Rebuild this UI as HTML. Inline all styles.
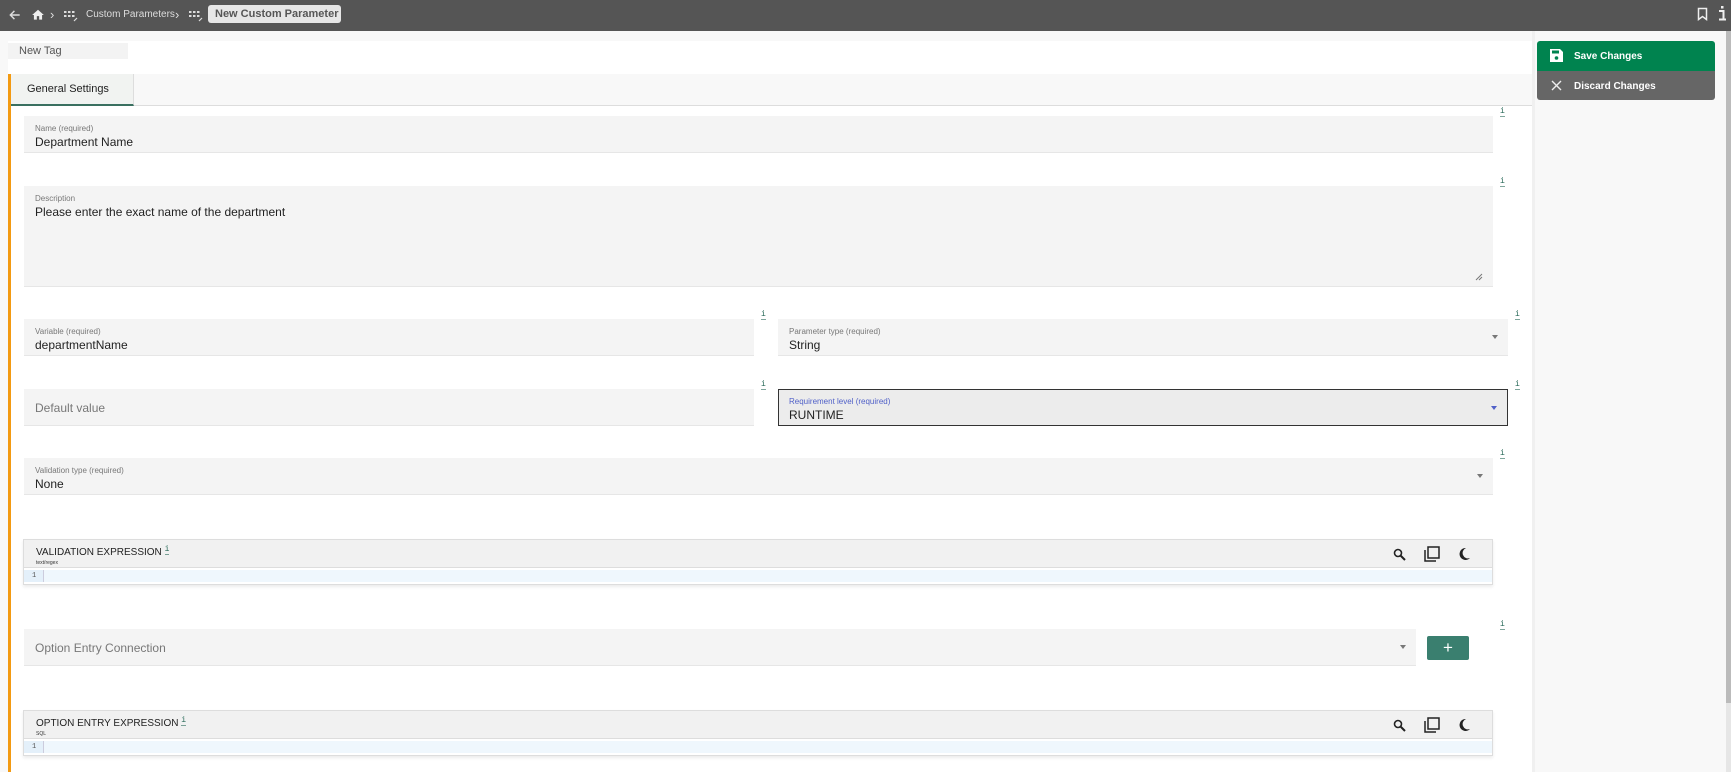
<!DOCTYPE html>
<html><head><meta charset="utf-8"><style>
*{box-sizing:border-box;margin:0;padding:0}
body{width:1731px;height:772px;overflow:hidden;background:#f8f8f8;font-family:"Liberation Sans",sans-serif;position:relative}
.abs{position:absolute;white-space:nowrap}
.top{left:0;top:0;width:1731px;height:31px;background:#555}
.field{position:absolute;background:#f4f4f4;border-bottom:1px solid #e6e6e6}
.lbl{position:absolute;left:11px;top:8px;font-size:8px;color:#777;white-space:nowrap}
.val{position:absolute;left:11px;top:19px;font-size:12px;color:#222;white-space:nowrap}
.ph{position:absolute;left:11px;top:12px;font-size:12px;color:#777}
.info{position:absolute;font-family:"Liberation Mono",monospace;font-size:8px;color:#2a6a5a;line-height:8px}
.info:after{content:"";position:absolute;left:0;right:0;bottom:-1px;height:1px;background:#2a6a5a;opacity:.6}
.arrow{position:absolute;right:10px;top:16px;width:0;height:0;border-left:3.5px solid transparent;border-right:3.5px solid transparent;border-top:4px solid #777}
.ed{position:absolute;left:23px;width:1470px;height:46px;border:1px solid #ddd;background:#fff;box-shadow:0 2px 3px rgba(0,0,0,.08)}
.edh{position:absolute;left:0;top:0;right:0;height:28px;background:#f1f1f1;border-bottom:1px solid #ddd}
.edt{position:absolute;left:12px;top:7px;font-size:10px;color:#222;white-space:nowrap}
.eds{position:absolute;left:12px;top:20px;font-size:5px;color:#333}
.edl{position:absolute;left:0;top:30px;right:0;height:12px;background:#eff7fd}
.edn{position:absolute;left:0;top:30px;width:20px;height:12px;background:#e4f0fa;border-right:1px solid #ccd;font-size:7px;color:#555;padding:2px 0 0 8px;font-family:"Liberation Mono",monospace}
</style></head><body>
<div class="abs top"></div>
<svg class="abs" style="left:8px;top:8px" width="14" height="14" viewBox="0 0 24 24"><path d="M20 12H5M11 5l-7 7 7 7" stroke="#ddd" stroke-width="2.5" fill="none"/></svg>
<svg class="abs" style="left:31px;top:8px" width="14" height="14" viewBox="0 0 24 24"><path d="M10 20v-6h4v6h5v-8h3L12 3 2 12h3v8z" fill="#eee"/></svg>
<div class="abs" style="left:50px;top:7px;color:#ddd;font-size:13px">›</div>
<svg class="abs" style="left:64px;top:10px" width="14" height="12" viewBox="0 0 14 12"><g fill="#ddd"><rect x="0" y="1" width="2.5" height="2"/><rect x="4" y="1" width="2.5" height="2"/><rect x="8" y="1" width="2.5" height="2"/><rect x="0" y="5" width="2.5" height="2"/><rect x="4" y="5" width="2.5" height="2"/><rect x="8" y="5" width="2.5" height="2"/></g><path d="M10 11l3-3" stroke="#ddd" stroke-width="1.2"/></svg>
<div class="abs" style="left:86px;top:9px;color:#ddd;font-size:10px">Custom Parameters</div>
<div class="abs" style="left:175px;top:7px;color:#ddd;font-size:13px">›</div>
<svg class="abs" style="left:189px;top:10px" width="14" height="12" viewBox="0 0 14 12"><g fill="#ddd"><rect x="0" y="1" width="2.5" height="2"/><rect x="4" y="1" width="2.5" height="2"/><rect x="8" y="1" width="2.5" height="2"/><rect x="0" y="5" width="2.5" height="2"/><rect x="4" y="5" width="2.5" height="2"/><rect x="8" y="5" width="2.5" height="2"/></g><path d="M10 11l3-3" stroke="#ddd" stroke-width="1.2"/></svg>
<div class="abs" style="left:208px;top:5px;width:133px;height:18px;background:#e6e6e6;border-radius:3px;color:#555;font-size:11px;font-weight:bold;padding:3px 0 0 7px">New Custom Parameter</div>
<svg class="abs" style="left:1697px;top:7px" width="11" height="14" viewBox="0 0 11 14"><path d="M1.5 1.5h8v11l-4-3-4 3z" stroke="#eee" stroke-width="1.5" fill="none"/></svg>
<svg class="abs" style="left:1717px;top:6px" width="10" height="15" viewBox="0 0 10 15"><rect x="4" y="0" width="2.5" height="2.5" fill="#eee"/><path d="M2 5h4.5v8M2 13.5h7" stroke="#eee" stroke-width="2" fill="none"/></svg>

<div class="abs" style="left:8px;top:41px;width:1524px;height:33px;background:#fff"></div>
<div class="abs" style="left:8px;top:43px;width:120px;height:16px;background:#f3f3f3;font-size:11px;color:#555;padding:2px 0 0 11px">New Tag</div>
<div class="abs" style="left:8px;top:74px;width:1524px;height:698px;background:#fff"></div>
<div class="abs" style="left:8px;top:74px;width:1524px;height:32px;background:#f8f8f8;border-bottom:1px solid #ddd"></div>
<div class="abs" style="left:11px;top:74px;width:123px;height:32px;background:#f1f3f1;border-right:1px solid #ddd;border-bottom:2px solid #3a7060;font-size:11px;color:#222;padding:9px 0 0 16px">General Settings</div>
<div class="abs" style="left:8px;top:74px;width:3px;height:698px;background:#f39a12"></div>
<div class="abs" style="left:1532px;top:31px;width:3px;height:741px;background:#f0f0f0"></div>
<div class="abs" style="left:1726px;top:31px;width:5px;height:672px;background:#bbb"></div>
<div class="abs" style="left:1726px;top:703px;width:5px;height:69px;background:#e6e6e6"></div>

<div class="abs" style="left:1537px;top:41px;width:178px;height:30px;background:#00834f;border-radius:3px 3px 0 0;color:#fff;font-size:10px;font-weight:bold;padding:10px 0 0 37px">Save Changes</div>
<svg class="abs" style="left:1550px;top:49px" width="13" height="13" viewBox="0 0 13 13"><path d="M0 0h10l3 3v10H0z" fill="#fff"/><rect x="2" y="1.5" width="7" height="3" fill="#00834f"/><circle cx="6.5" cy="9" r="1.8" fill="#00834f"/></svg>
<div class="abs" style="left:1537px;top:71px;width:178px;height:29px;background:#666;border-radius:0 0 3px 3px;color:#fff;font-size:10px;font-weight:bold;padding:10px 0 0 37px">Discard Changes</div>
<svg class="abs" style="left:1551px;top:80px" width="11" height="11" viewBox="0 0 11 11"><path d="M1 1l9 9M10 1l-9 9" stroke="#eee" stroke-width="1.4"/></svg>

<div class="field" style="left:24px;top:116px;width:1469px;height:37px"><div class="lbl">Name (required)</div><div class="val">Department Name</div></div>
<div class="info" style="left:1500px;top:108px">i</div>
<div class="field" style="left:24px;top:186px;width:1469px;height:101px"><div class="lbl">Description</div><div class="val">Please enter the exact name of the department</div>
<svg style="position:absolute;right:10px;bottom:5px" width="8" height="8"><path d="M1 7L7 1M4 7L7 4" stroke="#777"/></svg></div>
<div class="info" style="left:1500px;top:178px">i</div>
<div class="field" style="left:24px;top:319px;width:730px;height:37px"><div class="lbl">Variable (required)</div><div class="val">departmentName</div></div>
<div class="info" style="left:761px;top:311px">i</div>
<div class="field" style="left:778px;top:319px;width:730px;height:37px"><div class="lbl">Parameter type (required)</div><div class="val">String</div><div class="arrow"></div></div>
<div class="info" style="left:1515px;top:311px">i</div>
<div class="field" style="left:24px;top:389px;width:730px;height:37px"><div class="ph">Default value</div></div>
<div class="info" style="left:761px;top:381px">i</div>
<div class="field" style="left:778px;top:389px;width:730px;height:37px;background:#ececec;border:1px solid #333"><div class="lbl" style="color:#5060c8;top:7px;left:10px">Requirement level (required)</div><div class="val" style="left:10px;top:18px">RUNTIME</div><div class="arrow" style="border-top-color:#5060c8"></div></div>
<div class="info" style="left:1515px;top:381px">i</div>
<div class="field" style="left:24px;top:458px;width:1469px;height:37px"><div class="lbl">Validation type (required)</div><div class="val">None</div><div class="arrow"></div></div>
<div class="info" style="left:1500px;top:450px">i</div>

<div class="ed" style="top:539px"><div class="edh"><div class="edt">VALIDATION EXPRESSION <span class="info" style="position:relative;top:-4px">i</span></div><div class="eds">text/regex</div></div><div class="edl"></div><div class="edn">1</div></div>
<div class="ed" style="top:710px"><div class="edh"><div class="edt">OPTION ENTRY EXPRESSION <span class="info" style="position:relative;top:-4px">i</span></div><div class="eds">SQL</div></div><div class="edl"></div><div class="edn">1</div></div>

<svg class="abs" style="left:1393px;top:548px" width="13" height="13" viewBox="0 0 13 13"><circle cx="5" cy="5" r="3.5" stroke="#222" stroke-width="1.6" fill="none"/><path d="M7.5 7.5l4.5 4.5" stroke="#222" stroke-width="2"/></svg>
<svg class="abs" style="left:1424px;top:546px" width="16" height="16" viewBox="0 0 16 16"><path d="M1 4v11h11" stroke="#222" stroke-width="1.5" fill="none"/><rect x="4" y="1" width="11" height="11" stroke="#222" stroke-width="1.5" fill="none"/></svg>
<svg class="abs" style="left:1457px;top:547px" width="14" height="14" viewBox="0 0 14 14"><path d="M9 1a6 6 0 1 0 4 10A5 5 0 0 1 9 1z" fill="#222"/></svg>
<svg class="abs" style="left:1393px;top:719px" width="13" height="13" viewBox="0 0 13 13"><circle cx="5" cy="5" r="3.5" stroke="#222" stroke-width="1.6" fill="none"/><path d="M7.5 7.5l4.5 4.5" stroke="#222" stroke-width="2"/></svg>
<svg class="abs" style="left:1424px;top:717px" width="16" height="16" viewBox="0 0 16 16"><path d="M1 4v11h11" stroke="#222" stroke-width="1.5" fill="none"/><rect x="4" y="1" width="11" height="11" stroke="#222" stroke-width="1.5" fill="none"/></svg>
<svg class="abs" style="left:1457px;top:718px" width="14" height="14" viewBox="0 0 14 14"><path d="M9 1a6 6 0 1 0 4 10A5 5 0 0 1 9 1z" fill="#222"/></svg>

<div class="field" style="left:24px;top:629px;width:1392px;height:37px"><div class="ph">Option Entry Connection</div><div class="arrow"></div></div>
<div class="abs" style="left:1427px;top:636px;width:42px;height:24px;background:#3a7f6f;border-radius:2px;color:#fff;font-size:17px;text-align:center;line-height:23px">+</div>
<div class="info" style="left:1500px;top:621px">i</div>
</body></html>
